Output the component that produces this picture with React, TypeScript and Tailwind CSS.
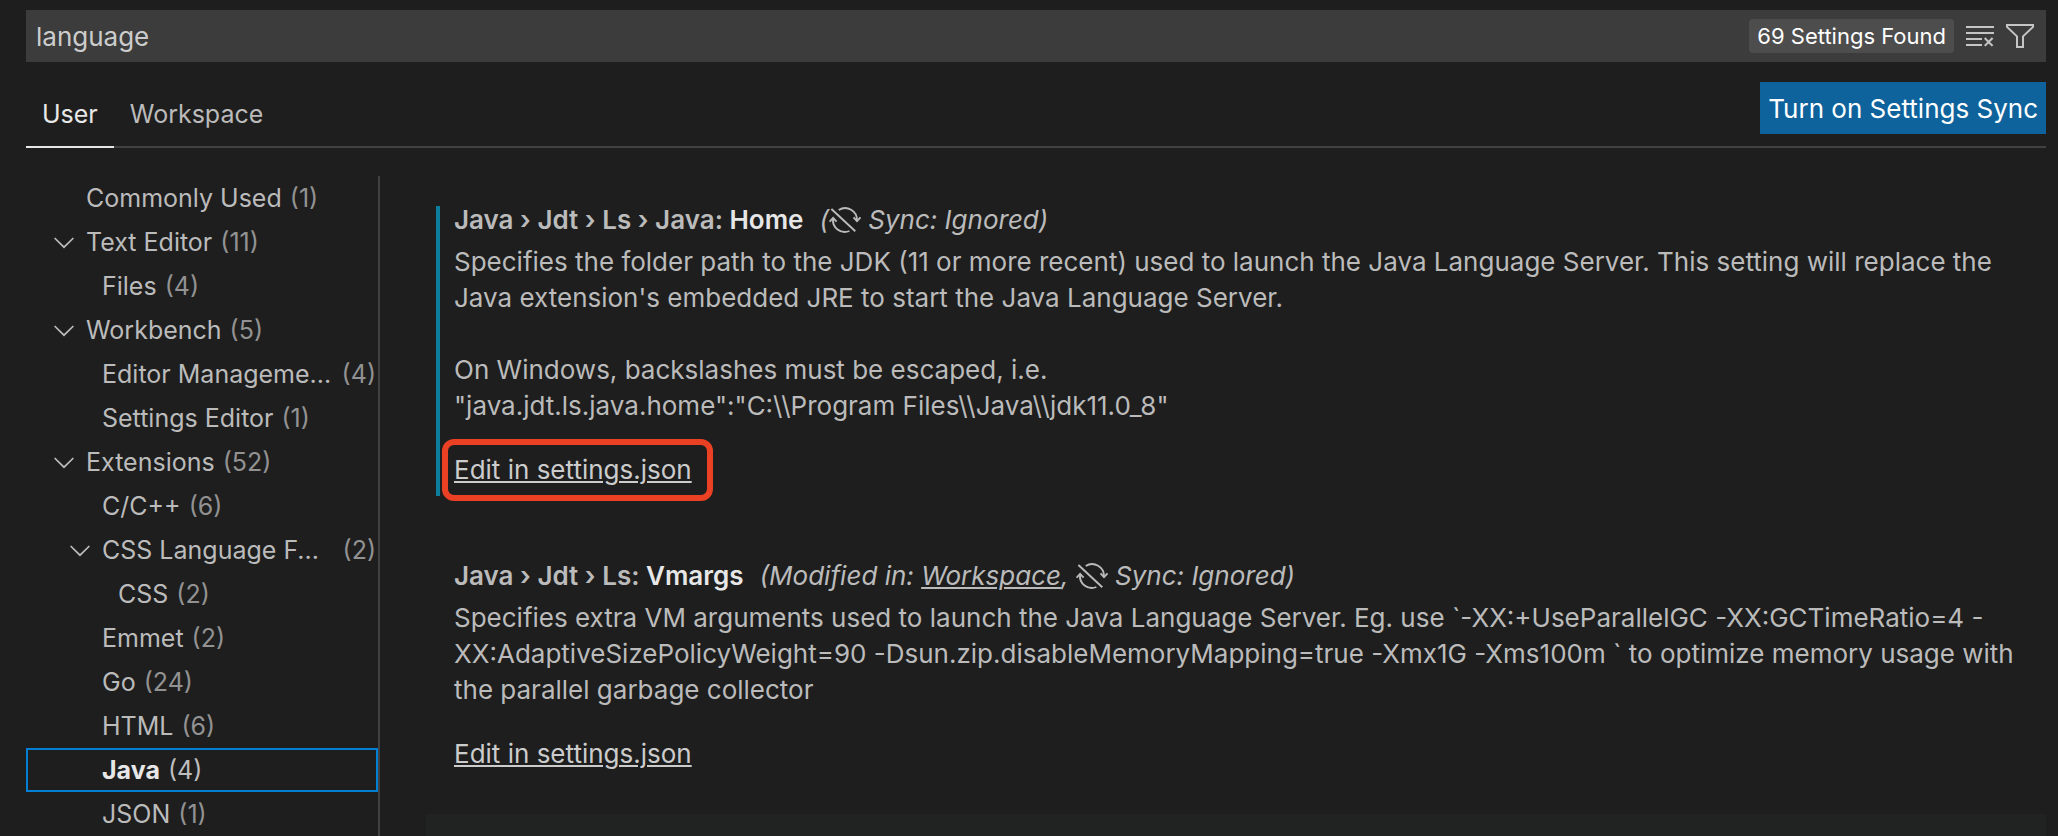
import type { ReactNode } from "react";
import { VscClearAll, VscFilter } from "react-icons/vsc";

type TreeItem = {
  label: string;
  count: number;
  level: 1 | 2 | 3;
  fullLabel?: string;
  open?: boolean;
  selected?: boolean;
};

const tree: TreeItem[] = [
  { label: "Commonly Used", count: 1, level: 1 },
  { label: "Text Editor", count: 11, level: 1, open: true },
  { label: "Files", count: 4, level: 2 },
  { label: "Workbench", count: 5, level: 1, open: true },
  { label: "Editor Manageme...", fullLabel: "Editor Management", count: 4, level: 2 },
  { label: "Settings Editor", count: 1, level: 2 },
  { label: "Extensions", count: 52, level: 1, open: true },
  { label: "C/C++", count: 6, level: 2 },
  { label: "CSS Language F...", fullLabel: "CSS Language Features", count: 2, level: 2, open: true },
  { label: "CSS", count: 2, level: 3 },
  { label: "Emmet", count: 2, level: 2 },
  { label: "Go", count: 24, level: 2 },
  { label: "HTML", count: 6, level: 2 },
  { label: "Java", count: 4, level: 2, selected: true },
  { label: "JSON", count: 1, level: 2 },
];

const indent = { 1: "pl-[22px]", 2: "pl-[38px]", 3: "pl-[54px]" };

function Chevron() {
  return (
    <svg viewBox="0 0 32 32" className="size-8" fill="none" stroke="currentColor" strokeWidth="1.7">
      <path d="M6.6 12 16 21.2 25.4 12" />
    </svg>
  );
}

function SyncIgnored() {
  return (
    <svg
      viewBox="0 0 32 32"
      className="-mt-0.5 size-8 shrink-0"
      fill="none"
      stroke="currentColor"
      strokeWidth="1.9"
    >
      <path d="M2.4 5 26.3 27.3" />
      <path d="M9.7 6A11.8 11.8 0 0 1 27.9 16.8" />
      <path d="M24.5 13.3 28 17.2 31.5 13.3" />
      <path d="M4.1 14.4A11.8 11.8 0 0 0 20.4 27" />
      <path d="M.6 17.7 4.1 13.8 7.6 17.7" />
    </svg>
  );
}

function TreeRow({ item }: { item: TreeItem }) {
  return (
    <li>
      <button
        type="button"
        title={item.fullLabel}
        className={`flex h-11 w-full items-center pr-0.5 text-left whitespace-nowrap ${indent[item.level]} ${
          item.selected ? "text-[#e7e7e7] outline-2 -outline-offset-2 outline-[#007fd4]" : ""
        }`}
      >
        <span className="flex w-[38px] shrink-0">{item.open && <Chevron />}</span>
        <span
          className={`pt-0.5 ${item.selected ? "font-bold" : ""} ${item.fullLabel ? "flex-1" : ""}`}
        >
          {item.label}
        </span>
        <span
          className={`shrink-0 pt-0.5 pl-2 ${item.selected ? "text-[#bebebe]" : "text-[#929292]"}`}
        >
          ({item.count})
        </span>
      </button>
    </li>
  );
}

function Setting({
  category,
  name,
  note,
  modified,
  highlighted,
  children,
}: {
  category: string;
  name: string;
  note: ReactNode;
  modified?: boolean;
  highlighted?: boolean;
  children: ReactNode;
}) {
  return (
    <section
      className={`border-l-4 pl-3.5 ${modified ? "border-[#0c7d9d]" : "border-transparent"}`}
    >
      <h2 className="flex h-[38px] items-start leading-7 whitespace-pre">
        <span className="font-semibold">{category}: </span>
        <span className="font-semibold text-[#e7e7e7]">{name}</span>
        <span className="ml-4 flex italic">{note}</span>
      </h2>
      <div className="leading-9">{children}</div>
      <div className="relative mt-[22px] h-[50px]">
        <a
          href="#settings-json"
          className="leading-[48px] text-[#cccccc] underline decoration-2 underline-offset-2"
        >
          Edit in settings.json
        </a>
        {highlighted && (
          <span className="pointer-events-none absolute -top-[7px] -left-3 h-[62px] w-[271px] rounded-xl border-6 border-[#ea4125]" />
        )}
      </div>
    </section>
  );
}

export default function App() {
  return (
    <div className="flex h-screen flex-col overflow-hidden bg-[#1e1e1e] pt-2.5 pl-[26px] font-['Inter',sans-serif] text-[26px] text-[#bbbbbb]">
      <div className="mr-3 flex h-[52px] shrink-0 items-center bg-[#3c3c3c] px-2.5">
        <input
          aria-label="Search settings"
          defaultValue="language"
          className="min-w-0 flex-1 bg-transparent text-[#cccccc] outline-none"
        />
        <span className="flex h-[34px] items-center rounded-sm bg-[#4d4d4d] px-2 text-[22px] text-white">
          69 Settings Found
        </span>
        <button type="button" aria-label="Clear search results" className="ml-2.5 text-[#c5c5c5]">
          <VscClearAll className="size-8" />
        </button>
        <button type="button" aria-label="Filter settings" className="ml-2 text-[#c5c5c5]">
          <VscFilter className="size-8" />
        </button>
      </div>

      <div className="mt-5 mr-3 flex h-[66px] shrink-0 items-start justify-between border-b-2 border-[#414141]">
        <div className="flex text-[25px]">
          <button
            type="button"
            className="h-[66px] border-b-2 border-[#e7e7e7] px-4 pt-0.5 text-[#e7e7e7]"
          >
            User
          </button>
          <button type="button" className="h-[66px] border-b-2 border-transparent px-4 pt-0.5">
            Workspace
          </button>
        </div>
        <button type="button" className="h-[52px] bg-[#0e639c] px-2 text-white">
          Turn on Settings Sync
        </button>
      </div>

      <div className="mt-7 flex min-h-0 flex-1">
        <nav
          aria-label="Settings"
          className="w-[354px] shrink-0 border-r-2 border-[#414141] text-[25px]"
        >
          <ul>
            {tree.map((item) => (
              <TreeRow key={item.label} item={item} />
            ))}
          </ul>
        </nav>

        <main className="min-w-0 flex-1 pt-[30px] pr-3 pl-[46px]">
          <div className="flex flex-col gap-[66px] pr-7 pl-2.5">
            <Setting
              category="Java › Jdt › Ls › Java"
              name="Home"
              modified
              highlighted
              note={
                <>
                  (<SyncIgnored /> Sync: Ignored)
                </>
              }
            >
              <p>
                Specifies the folder path to the JDK (11 or more recent) used to launch the Java
                Language Server. This setting will replace the Java extension's embedded JRE to
                start the Java Language Server.
              </p>
              <p className="mt-9">
                On Windows, backslashes must be escaped, i.e.
                <br />
                {'"java.jdt.ls.java.home":"C:\\\\Program Files\\\\Java\\\\jdk11.0_8"'}
              </p>
            </Setting>
            <Setting
              category="Java › Jdt › Ls"
              name="Vmargs"
              note={
                <>
                  (Modified in:{" "}
                  <a href="#workspace" className="underline decoration-2 underline-offset-2">
                    Workspace
                  </a>
                  , <SyncIgnored /> Sync: Ignored)
                </>
              }
            >
              <p>
                Specifies extra VM arguments used to launch the Java Language Server. Eg. use
                `-XX:+UseParallelGC -XX:GCTimeRatio=4 -XX:AdaptiveSizePolicyWeight=90
                -Dsun.zip.disableMemoryMapping=true -Xmx1G -Xms100m ` to optimize memory usage with
                the parallel garbage collector
              </p>
            </Setting>
          </div>
          <div className="mt-[34px] h-6 bg-[#212322]" />
        </main>
      </div>
    </div>
  );
}
